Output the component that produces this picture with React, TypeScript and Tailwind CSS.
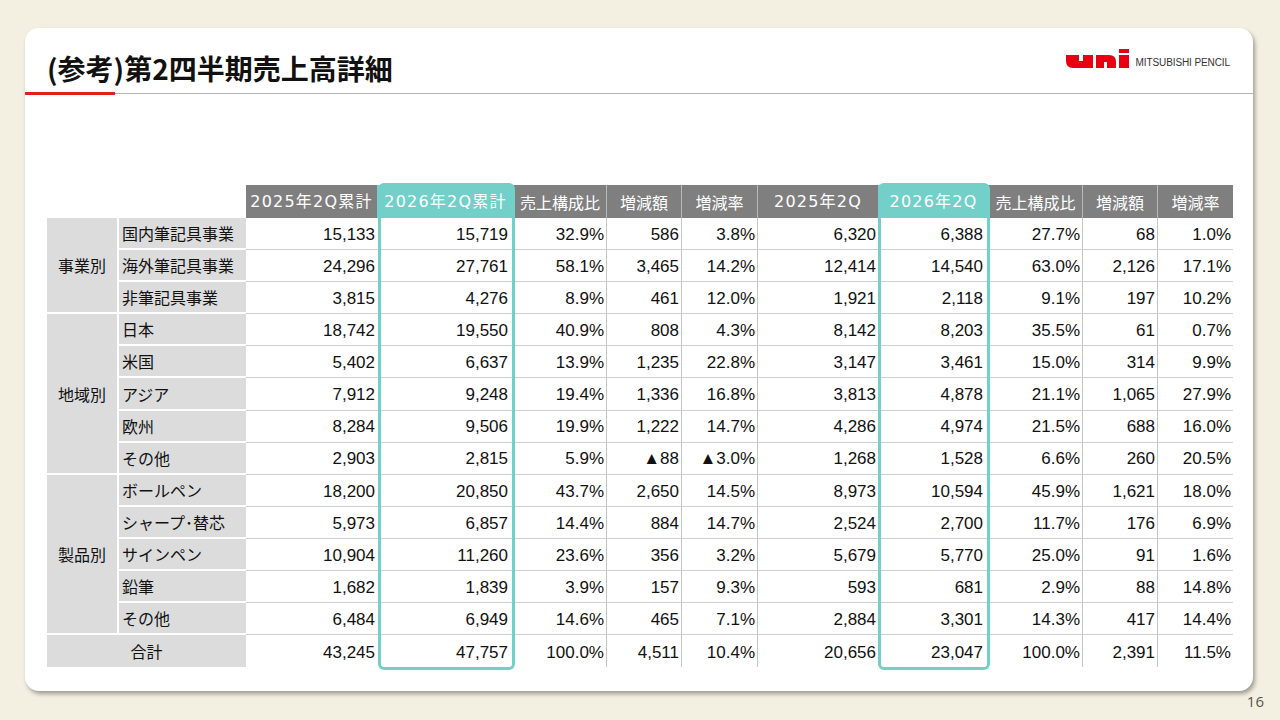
import React from "react"

type Col = { w: number; head: string; year?: boolean; teal?: boolean; line?: boolean }

const COLS: Col[] = [
    { w: 131, head: "2025年2Q累計", year: true },
    { w: 137, head: "2026年2Q累計", year: true, teal: true },
    { w: 92, head: "売上構成比" },
    { w: 75, head: "増減額", line: true },
    { w: 76, head: "増減率", line: true },
    { w: 121, head: "2025年2Q", year: true, line: true },
    { w: 111, head: "2026年2Q", year: true, teal: true },
    { w: 93, head: "売上構成比" },
    { w: 75, head: "増減額", line: true },
    { w: 76, head: "増減率", line: true },
]

type Row = { label: string; values: string[] }
type Group = { name: string; rows: Row[] }

const GROUPS: Group[] = [
    {
        name: "事業別",
        rows: [
            { label: "国内筆記具事業", values: ["15,133", "15,719", "32.9%", "586", "3.8%", "6,320", "6,388", "27.7%", "68", "1.0%"] },
            { label: "海外筆記具事業", values: ["24,296", "27,761", "58.1%", "3,465", "14.2%", "12,414", "14,540", "63.0%", "2,126", "17.1%"] },
            { label: "非筆記具事業", values: ["3,815", "4,276", "8.9%", "461", "12.0%", "1,921", "2,118", "9.1%", "197", "10.2%"] },
        ],
    },
    {
        name: "地域別",
        rows: [
            { label: "日本", values: ["18,742", "19,550", "40.9%", "808", "4.3%", "8,142", "8,203", "35.5%", "61", "0.7%"] },
            { label: "米国", values: ["5,402", "6,637", "13.9%", "1,235", "22.8%", "3,147", "3,461", "15.0%", "314", "9.9%"] },
            { label: "アジア", values: ["7,912", "9,248", "19.4%", "1,336", "16.8%", "3,813", "4,878", "21.1%", "1,065", "27.9%"] },
            { label: "欧州", values: ["8,284", "9,506", "19.9%", "1,222", "14.7%", "4,286", "4,974", "21.5%", "688", "16.0%"] },
            { label: "その他", values: ["2,903", "2,815", "5.9%", "▲88", "▲3.0%", "1,268", "1,528", "6.6%", "260", "20.5%"] },
        ],
    },
    {
        name: "製品別",
        rows: [
            { label: "ボールペン", values: ["18,200", "20,850", "43.7%", "2,650", "14.5%", "8,973", "10,594", "45.9%", "1,621", "18.0%"] },
            { label: "シャープ･替芯", values: ["5,973", "6,857", "14.4%", "884", "14.7%", "2,524", "2,700", "11.7%", "176", "6.9%"] },
            { label: "サインペン", values: ["10,904", "11,260", "23.6%", "356", "3.2%", "5,679", "5,770", "25.0%", "91", "1.6%"] },
            { label: "鉛筆", values: ["1,682", "1,839", "3.9%", "157", "9.3%", "593", "681", "2.9%", "88", "14.8%"] },
            { label: "その他", values: ["6,484", "6,949", "14.6%", "465", "7.1%", "2,884", "3,301", "14.3%", "417", "14.4%"] },
        ],
    },
]

const TOTAL = ["43,245", "47,757", "100.0%", "4,511", "10.4%", "20,656", "23,047", "100.0%", "2,391", "11.5%"]

const JP = "font-['Noto_Sans_CJK_JP',sans-serif]"

function UniLogo() {
    return (
        <div className="flex items-end gap-[7px]">
            <svg width="63" height="19" viewBox="0 0 63 19" fill="#e60012">
                <path d="M0 6 H13 V12 H17 V6 H27 V19 H7 Q0 19 0 12 Z" />
                <path d="M30 19 V6 H43 Q50 6 50 13 V19 H41 V13 H38 V19 Z" />
                <rect x="53" y="6" width="10" height="13" />
                <rect x="53" y="0" width="10" height="4" />
            </svg>
            <span className="font-['Liberation_Sans',sans-serif] text-[10px] leading-[10px] text-[#333] tracking-[-0.1px]">
                MITSUBISHI PENCIL
            </span>
        </div>
    )
}

function DataCells({ values, last }: { values: string[]; last?: boolean }) {
    return (
        <>
            {values.map((v, i) => {
                const c = COLS[i]
                return (
                    <td
                        key={i}
                        className={
                            "text-right align-middle whitespace-nowrap font-['Liberation_Sans','DejaVu_Sans',sans-serif] text-[17px] text-[#111] pt-[2px] " +
                            (c.teal ? "pr-[6px] " : "pr-[2px] ") +
                            (c.line ? "border-l border-l-[#c4c4c4] " : "") +
                            (last ? "" : "border-b-[1.5px] border-b-[#cfcfcf]")
                        }
                    >
                        {v}
                    </td>
                )
            })}
        </>
    )
}

function SalesTable() {
    return (
        <div className="relative w-[1186px]">
            <table className="table-fixed border-separate border-spacing-0 w-[1186px]">
                <colgroup>
                    <col className="w-[72px]" />
                    <col className="w-[127px]" />
                    {COLS.map((c, i) => (
                        <col key={i} style={{ width: c.w }} />
                    ))}
                </colgroup>
                <thead>
                    <tr className="h-[33px]">
                        <th />
                        <th />
                        {COLS.map((c, i) => (
                            <th
                                key={i}
                                className={
                                    "font-normal text-white text-center whitespace-nowrap overflow-hidden text-[16px] " +
                                    (c.year ? "font-['DejaVu_Sans','Noto_Sans_CJK_JP',sans-serif] tracking-[1.2px] " : JP + " ") +
                                    (c.teal ? "bg-[#72d0c9] " : "bg-[#7f7f7f] ") +
                                    (c.line ? "border-l border-l-[#b8b8b8]" : "")
                                }
                            >
                                {c.head}
                            </th>
                        ))}
                    </tr>
                </thead>
                <tbody>
                    {GROUPS.map((g) =>
                        g.rows.map((r, ri) => (
                            <tr key={g.name + r.label} className="h-[32.1px]">
                                {ri === 0 && (
                                    <td
                                        rowSpan={g.rows.length}
                                        className={`bg-[#dcdcdc] border-r-2 border-r-white border-b-2 border-b-white text-center align-middle text-[16px] text-[#111] ${JP}`}
                                    >
                                        {g.name}
                                    </td>
                                )}
                                <td className={`bg-[#dcdcdc] border-b-2 border-b-white pl-[3px] align-middle whitespace-nowrap text-[16px] text-[#111] ${JP}`}>
                                    {r.label}
                                </td>
                                <DataCells values={r.values} />
                            </tr>
                        ))
                    )}
                    <tr className="h-[32.1px]">
                        <td colSpan={2} className={`bg-[#dcdcdc] text-center align-middle text-[16px] text-[#111] ${JP}`}>
                            合計
                        </td>
                        <DataCells values={TOTAL} last />
                    </tr>
                </tbody>
            </table>

            {/* highlighted 2026 columns */}
            <div className="pointer-events-none absolute left-[331px] top-[-2px] w-[137px] h-[487px] rounded-[6px] border-[3px] border-[#72d0c9]" />
            <div className="pointer-events-none absolute left-[831px] top-[-2px] w-[112px] h-[487px] rounded-[6px] border-[3px] border-[#72d0c9]" />
        </div>
    )
}

export default function App() {
    return (
        <div className="w-[1280px] h-[720px] overflow-hidden bg-[#f3f0e1] pt-[28px] pl-[25px]">
            <div className="w-[1228px] h-[663px] rounded-[14px] bg-white shadow-[2px_3px_4px_rgba(0,0,0,0.35)] flex flex-col">
                <div className="flex justify-between items-start pt-[21px] pl-[22px] pr-[23px]">
                    <h1 className={`mt-[3px] leading-[32px] text-[28px] font-bold text-[#111] ${JP}`}>
                        (参考)第2四半期売上高詳細
                    </h1>
                    <UniLogo />
                </div>
                <div className="mt-[8px] flex items-center">
                    <div className="w-[90px] h-[3px] bg-[#e0201c]" />
                    <div className="flex-1 h-px bg-[#b4b4b4]" />
                </div>
                <div className="mt-[90px] ml-[22px]">
                    <SalesTable />
                </div>
            </div>
            <div className="w-[1239px] mt-[1px] text-right text-[15px] leading-[18px] text-[#555] font-['Open_Sans',sans-serif]">
                16
            </div>
        </div>
    )
}
